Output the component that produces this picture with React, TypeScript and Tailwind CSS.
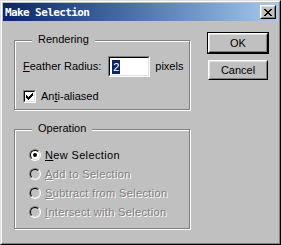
import type { ReactNode } from 'react';

const face = 'bg-[#c0c0c0]';

function Raised({ children, className = '' }: { children: ReactNode; className?: string }) {
  return (
    <div className={`border border-t-white border-l-white border-r-black border-b-black ${className}`}>
      <div className="w-full h-full border border-t-[#dfdfdf] border-l-[#dfdfdf] border-r-[#808080] border-b-[#808080] flex items-center justify-center">
        {children}
      </div>
    </div>
  );
}

function GroupBox({ label, className = '', children }: { label: string; className?: string; children: ReactNode }) {
  return (
    <div className={`relative border border-[#808080] shadow-[inset_1px_1px_0_#fff,1px_1px_0_#fff] ${className}`}>
      <span className={`absolute left-[17px] -top-[8px] px-[6px] leading-[13px] ${face}`}>{label}</span>
      {children}
    </div>
  );
}

function Radio({ checked, disabled, children }: { checked?: boolean; disabled?: boolean; children: ReactNode }) {
  return (
    <div className="flex items-center h-[12px]">
      <div className="w-[12px] h-[12px] rounded-full border border-t-[#808080] border-l-[#808080] border-r-white border-b-white">
        <div
          className={`w-full h-full rounded-full border border-t-black border-l-black border-r-[#dfdfdf] border-b-[#dfdfdf] flex items-center justify-center ${
            disabled ? face : 'bg-white'
          }`}
        >
          {checked && <div className="w-[4px] h-[4px] rounded-full bg-black" />}
        </div>
      </div>
      <span
        className={`ml-[4px] leading-[13px] tracking-[0.35px] ${
          disabled ? 'text-[#808080] [text-shadow:1px_1px_0_#fff]' : 'text-black'
        }`}
      >
        {children}
      </span>
    </div>
  );
}

export default function App() {
  return (
    <div
      className={`w-[281px] h-[245px] ${face} border border-t-[#dfdfdf] border-l-[#dfdfdf] border-r-black border-b-black font-['Liberation_Sans',Arial,sans-serif] text-[11px] text-black`}
    >
      <div className="h-full border border-t-white border-l-white border-r-[#808080] border-b-[#808080] p-px flex flex-col">
        {/* title bar */}
        <div className="h-[18px] flex items-center justify-between pl-[2px] pr-[2px] bg-gradient-to-r from-[#0a246a] to-[#a6caf0]">
          <span className="text-white font-bold font-['DejaVu_Sans_Mono',monospace] text-[11px] tracking-[-0.6px] leading-none">
            Make Selection
          </span>
          <Raised className={`w-[16px] h-[14px] ${face}`}>
            <svg width="8" height="7" viewBox="0 0 8 7" shapeRendering="crispEdges">
              <path d="M0 0h2v1h-2zM6 0h2v1h-2zM1 1h2v1h-2zM5 1h2v1h-2zM2 2h4v1h-4zM3 3h2v1h-2zM2 4h4v1h-4zM1 5h2v1h-2zM5 5h2v1h-2zM0 6h2v1h-2zM6 6h2v1h-2z" fill="#000" />
            </svg>
          </Raised>
        </div>

        <div className="flex pl-[11px]">
          {/* left column */}
          <div className="w-[176px] mt-[19px] flex flex-col">
            <GroupBox label="Rendering" className="h-[70px]">
              <div className="pt-[15px] pl-[8px] flex items-center">
                <span>
                  <u>F</u>eather Radius:
                </span>
                <div className="ml-[7px] w-[42px] h-[21px] border border-t-[#808080] border-l-[#808080] border-r-white border-b-white">
                  <div className="w-full h-full border border-t-black border-l-black border-r-[#dfdfdf] border-b-[#dfdfdf] bg-white flex items-center pl-[2px]">
                    <span className="bg-[#0a246a] text-white leading-[14px] px-px">2</span>
                  </div>
                </div>
                <span className="ml-[5px]">pixels</span>
              </div>
              <div className="mt-[11px] pl-[8px] flex items-center">
                <div className="w-[13px] h-[13px] border border-t-[#808080] border-l-[#808080] border-r-white border-b-white">
                  <div className="w-full h-full border border-t-black border-l-black border-r-[#dfdfdf] border-b-[#dfdfdf] bg-white flex items-center justify-center">
                    <svg width="7" height="7" viewBox="0 0 7 7" shapeRendering="crispEdges">
                      <path d="M6 0h1v3h-1zM5 1h1v3h-1zM4 2h1v3h-1zM3 3h1v3h-1zM2 4h1v3h-1zM1 3h1v3h-1zM0 2h1v3h-1z" fill="#000" />
                    </svg>
                  </div>
                </div>
                <span className="ml-[5px]">
                  An<u>t</u>i-aliased
                </span>
              </div>
            </GroupBox>

            <GroupBox label="Operation" className="h-[100px] mt-[19px]">
              <div className="pt-[19px] pl-[14px] flex flex-col gap-[7px]">
                <Radio checked>
                  <u>N</u>ew Selection
                </Radio>
                <Radio disabled>
                  <u>A</u>dd to Selection
                </Radio>
                <Radio disabled>
                  <u>S</u>ubtract from Selection
                </Radio>
                <Radio disabled>
                  <u>I</u>ntersect with Selection
                </Radio>
              </div>
            </GroupBox>
          </div>

          {/* buttons */}
          <div className="ml-[17px] mt-[11px] flex flex-col">
            <div className="border border-black w-[62px] h-[22px]">
              <Raised className="w-full h-full">OK</Raised>
            </div>
            <Raised className="mt-[6px] ml-px w-[60px] h-[20px]">Cancel</Raised>
          </div>
        </div>
      </div>
    </div>
  );
}
